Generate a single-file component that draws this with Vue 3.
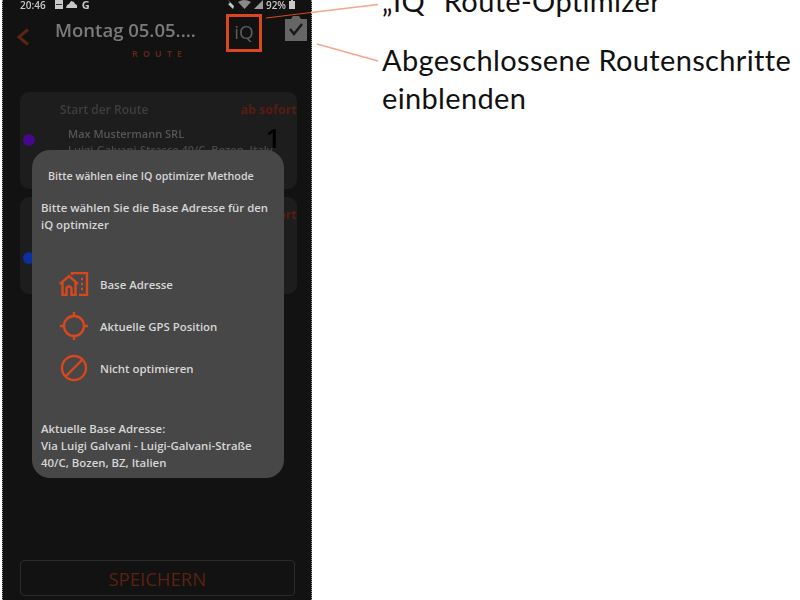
<template>
  <div class="page">
    <div class="phone">
      <div class="status-bar">
        <div class="status-left">
          <span>20:46</span>
          <svg class="status-doc" width="8" height="9" viewBox="0 0 8 9"><path d="M0 0h8v9H0z" fill="#c8c8c8" /><path d="M1 4h6v1H1z" fill="#333" /></svg>
          <svg width="11" height="7" viewBox="0 0 11 7"><path d="M0 7l1-3 2-1 2-3 3 1 1 2 2 1v3z" fill="#c8c8c8" /></svg>
          <span class="status-g">G</span>
        </div>
        <div class="status-right">
          <svg width="8" height="9" viewBox="0 0 8 9"><path d="M1 0l6 6-1 3-5-5 2-1z" fill="#c8c8c8" /></svg>
          <svg width="13" height="9" viewBox="0 0 13 9"><path d="M0 2q6-4 13 0L6.500 9z" fill="#8a8a8a" /></svg>
          <svg width="9" height="9" viewBox="0 0 9 9"><path d="M9 0v9H0z" fill="#9a9a9a" /></svg>
          <span>92%</span>
          <svg width="6" height="9" viewBox="0 0 6 9"><path d="M0 1h2V0h2v1h2v8H0z" fill="#c8c8c8" /></svg>
        </div>
      </div>

      <div class="header">
        <svg class="back" width="14" height="18" viewBox="0 0 14 18"><path d="M12 1.500L3 9l9 7.500" fill="none" stroke="#5c2415" stroke-width="3" /></svg>
        <div class="header-title">
          <div class="title">Montag 05.05....</div>
          <div class="subtitle">ROUTE</div>
        </div>
        <div class="iq-box">iQ</div>
        <svg class="clipboard" width="24" height="25" viewBox="0 0 24 25">
          <path d="M1 3h6l2-3h6l2 3h6v22H1z" fill="#666" />
          <path d="M6 13l4 5 8-10" fill="none" stroke="#1a1a1a" stroke-width="2.500" />
        </svg>
      </div>

      <div class="cards">
        <div class="card">
          <div class="card-top">
            <span class="card-label">Start der Route</span>
            <span class="card-time">ab sofort</span>
          </div>
          <div class="card-body">
            <span class="dot dot-purple"></span>
            <div class="card-text">
              <div class="card-name">Max Mustermann SRL</div>
              <div class="card-address">Luigi-Galvani-Strasse 40/C, Bozen, Italy</div>
            </div>
            <span class="card-number">1</span>
          </div>
        </div>
        <div class="card">
          <div class="card-top">
            <span class="card-label"></span>
            <span class="card-time">ab sofort</span>
          </div>
          <div class="card-body second">
            <span class="dot dot-blue"></span>
          </div>
        </div>
      </div>

      <button class="save">SPEICHERN</button>

      <div class="modal">
        <div class="modal-title">Bitte wählen eine IQ optimizer Methode</div>
        <div class="modal-text">Bitte wählen Sie die Base Adresse für den iQ optimizer</div>
        <div class="options">
          <div class="option">
            <svg width="30" height="24" viewBox="0 0 30 24" fill="none" stroke="#d9481c" stroke-width="2.400">
              <path d="M1 12L10 4l9 8" />
              <path d="M3.500 11v12h4v-6a2.500 2.500 0 0 1 5 0v6h4V11" />
              <path d="M13 3V1h15v22h-8" />
              <path d="M22 7h2M22 12h2M22 17h2" />
            </svg>
            <span>Base Adresse</span>
          </div>
          <div class="option">
            <svg width="30" height="30" viewBox="0 0 30 30" fill="none" stroke="#d9481c" stroke-width="2.400">
              <circle cx="15" cy="15" r="10" />
              <path d="M15 1v4M15 25v4M1 15h4M25 15h4" />
            </svg>
            <span>Aktuelle GPS Position</span>
          </div>
          <div class="option">
            <svg width="30" height="28" viewBox="0 0 30 28" fill="none" stroke="#d9481c" stroke-width="2.400">
              <circle cx="15" cy="14" r="12" />
              <path d="M6.500 22.500l17-17" />
            </svg>
            <span>Nicht optimieren</span>
          </div>
        </div>
        <div class="current">
          <div>Aktuelle Base Adresse:</div>
          <div>Via Luigi Galvani - Luigi-Galvani-Straße</div>
          <div>40/C, Bozen, BZ, Italien</div>
        </div>
      </div>
    </div>

    <div class="notes">
      <div class="note note-first">„IQ“ Route-Optimizer</div>
      <div class="note">Abgeschlossene Routenschritte einblenden</div>
    </div>

    <svg class="leaders" width="800" height="600" viewBox="0 0 800 600">
      <path d="M266 18L311 12.500" stroke="#d9481c" stroke-width="1.200" fill="none" />
      <path d="M311 12.500L378 4.500" stroke="#f4a68c" stroke-width="1.400" fill="none" />
      <path d="M317 44L378 61" stroke="#f4a68c" stroke-width="1.400" fill="none" />
    </svg>
  </div>
</template>

<script setup>
</script>

<style>
html,
body {
  background: #fff;
  overflow: hidden;
}
</style>

<style scoped>
.page {
  position: relative;
  display: flex;
  width: 800px;
  height: 600px;
  overflow: hidden;
  background: #fff;
  font-family: "Open Sans", sans-serif;
}

.phone {
  position: relative;
  display: flex;
  flex-direction: column;
  flex-shrink: 0;
  box-sizing: border-box;
  width: 310px;
  height: 600px;
  margin-left: 2px;
  background: #121212;
  border-left: 1px dotted #999;
  border-right: 1px dotted #999;
  filter: blur(0.5px);
}

.status-bar {
  display: flex;
  justify-content: space-between;
  align-items: center;
  height: 9px;
  padding: 0 16px 0 17px;
  color: #c8c8c8;
  font-size: 10px;
  font-weight: 600;
}

.status-left,
.status-right {
  display: flex;
  align-items: center;
  gap: 3px;
}

.status-doc {
  margin-left: 6px;
}

.status-g {
  margin-left: 2px;
  font-size: 11px;
  font-weight: 700;
}

.header {
  display: flex;
  align-items: flex-start;
  height: 52px;
  padding-top: 5px;
}

.back {
  margin: 14px 0 0 13px;
}

.header-title {
  width: 171px;
  margin: 3px 0 0 25px;
}

.title {
  color: #7b7b7b;
  font-size: 18.500px;
  font-weight: 600;
  line-height: 26px;
  white-space: nowrap;
}

.subtitle {
  margin-top: 4px;
  padding-left: 77px;
  color: #5e2416;
  font-size: 9px;
  font-weight: 700;
  letter-spacing: 5px;
  line-height: 14px;
}

.iq-box {
  box-sizing: border-box;
  width: 36px;
  height: 38px;
  border: 3px solid #d9481c;
  color: #5c5c5c;
  font-size: 19px;
  line-height: 31px;
  text-align: center;
}

.clipboard {
  margin: 2px 0 0 22px;
}

.cards {
  display: flex;
  flex-direction: column;
  gap: 8px;
  padding: 26px 14px 0 17px;
}

.card {
  box-sizing: border-box;
  height: 97px;
  padding: 9px 0 0 3px;
  background: #1d1d1d;
  border-radius: 9px;
}

.card-top {
  display: flex;
  justify-content: space-between;
  padding-left: 37px;
  line-height: 17px;
}

.card-label {
  color: #3f3f3f;
  font-size: 12px;
  font-weight: 600;
}

.card-time {
  color: #5a1d12;
  font-size: 12.500px;
  font-weight: 700;
}

.card-body {
  display: flex;
  align-items: flex-start;
  margin-top: 8px;
}

.card-body.second {
  margin-top: 21px;
}

.dot {
  flex-shrink: 0;
  width: 12px;
  height: 12px;
  margin-top: 8px;
  border-radius: 50%;
}

.dot-purple {
  background: #45088a;
}

.dot-blue {
  background: #0b2fa0;
}

.card-text {
  width: 190px;
  margin-left: 33px;
  color: #565656;
  font-size: 11px;
  font-weight: 600;
  line-height: 16px;
  white-space: nowrap;
}

.card-address {
  color: #4a4a4a;
}

.card-number {
  margin: -4px 16px 0 auto;
  color: #000;
  font-size: 27px;
  font-weight: 600;
  line-height: 32px;
}

.save {
  box-sizing: border-box;
  width: 275px;
  height: 36px;
  margin: auto 0 4px 17px;
  padding: 0;
  background: transparent;
  border: 1.500px solid #2b2b2b;
  border-radius: 4px;
  color: #5e2212;
  font-family: inherit;
  font-size: 18.500px;
  font-weight: 500;
}

.modal {
  position: absolute;
  left: 29px;
  top: 150px;
  box-sizing: border-box;
  display: flex;
  flex-direction: column;
  width: 252px;
  height: 328px;
  padding: 18px 9px 0;
  background: #474747;
  border-radius: 18px;
  color: #d6d6d6;
  font-size: 11.400px;
  font-weight: 600;
}

.modal-title {
  padding-left: 7px;
  font-size: 10.700px;
  line-height: 16px;
  white-space: nowrap;
}

.modal-text {
  margin-top: 15px;
  width: 234px;
  line-height: 17px;
}

.options {
  display: flex;
  flex-direction: column;
  gap: 12px;
  margin-top: 36px;
  padding-left: 18px;
}

.option {
  display: flex;
  align-items: center;
  gap: 11px;
  height: 30px;
}

.current {
  margin-top: 37px;
  line-height: 17px;
  white-space: nowrap;
}

.notes {
  display: flex;
  flex-direction: column;
  gap: 21px;
  width: 415px;
  margin: -18px 0 0 70px;
  color: #111;
  font-family: Lato, sans-serif;
  font-size: 29px;
  letter-spacing: 0.350px;
  line-height: 38px;
}

.note-first {
  white-space: nowrap;
}

.leaders {
  position: absolute;
  left: 0;
  top: 0;
  pointer-events: none;
}
</style>
